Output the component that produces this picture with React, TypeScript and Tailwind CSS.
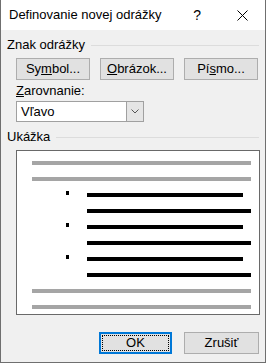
const font = { fontFamily: '"Liberation Sans", Arial, sans-serif' }

function Btn({ children, w = "w-[74px]" }: { children: React.ReactNode; w?: string }) {
  return (
    <div className={`${w} h-[22px] flex items-center justify-center bg-[#e1e1e1] border border-[#adadad] text-[13px] text-black`}>
      {children}
    </div>
  )
}

function Group({ title }: { title: string }) {
  return (
    <div className="flex items-center h-[16px] pl-[6px] pr-[6px]">
      <span className="text-[13px] leading-[16px] text-black">{title}</span>
      <div className="h-px flex-1 bg-[#dcdcdc] ml-[6px]" />
    </div>
  )
}

function Line({ kind }: { kind: "gray" | "short" | "long" }) {
  if (kind === "gray") return <div className="h-[4px] ml-[15px] w-[219px] bg-[#a5a5a5]" />
  return (
    <div className="flex items-start h-[4px]">
      <div className="w-[70px] shrink-0 pl-[49px]">
        {kind === "short" && <div className="w-[3px] h-[4px] bg-black -mt-[2px]" />}
      </div>
      <div className={`h-[4px] bg-black ${kind === "short" ? "w-[156px]" : "w-[164px]"}`} />
    </div>
  )
}

export default function App() {
  const rows: ("gray" | "short" | "long")[] = ["gray", "gray", "short", "long", "short", "long", "short", "long", "gray", "gray"]
  return (
    <div style={font} className="w-[266px] h-[363px] bg-[#f0f0f0] border-x border-b border-[#6f6f6f] flex flex-col text-black">
      <div className="h-[30px] bg-white flex items-center pl-[8px] shrink-0">
        <span className="text-[13px]">Definovanie novej odrážky</span>
        <span className="ml-auto mr-[36px] text-[14px]">?</span>
        <svg width="11" height="11" viewBox="0 0 11 11" className="mr-[17px]">
          <path d="M0.5 0.5 L10.5 10.5 M10.5 0.5 L0.5 10.5" stroke="#000" strokeWidth="1" />
        </svg>
      </div>

      <div className="mt-[7px]">
        <Group title="Znak odrážky" />
      </div>

      <div className="flex mt-[5px] pl-[15px] gap-[10px]">
        <Btn>Sy<u>m</u>bol...</Btn>
        <Btn><u>O</u>brázok...</Btn>
        <Btn>Pí<u>s</u>mo...</Btn>
      </div>

      <div className="pl-[15px] mt-[3px] text-[13px] leading-[16px]"><u>Z</u>arovnanie:</div>
      <div className="ml-[15px] mt-[2px] w-[128px] h-[21px] flex border border-[#a0a0a0] bg-white">
        <div className="flex-1 flex items-center pl-[4px] text-[13px]">Vľavo</div>
        <div className="w-[17px] flex items-center justify-center bg-[#e5e5e5] border-l border-[#a0a0a0]">
          <svg width="8" height="5" viewBox="0 0 8 5">
            <path d="M0.5 0.5 L4 4 L7.5 0.5" fill="none" stroke="#555" strokeWidth="1" />
          </svg>
        </div>
      </div>

      <div className="mt-[7px]">
        <Group title="Ukážka" />
      </div>

      <div className="ml-[15px] mt-[5px] w-[244px] h-[165px] border border-[#696969] bg-white flex flex-col gap-[12px] pt-[10px]">
        {rows.map((r, i) => (
          <Line key={i} kind={r} />
        ))}
      </div>

      <div className="flex justify-end gap-[12px] pr-[6px] mt-[17px]">
        <div className="w-[73px] h-[22px] border-2 border-[#0078d7] bg-[#e1e1e1] p-[1px]">
          <div className="w-full h-full border border-dotted border-black flex items-center justify-center text-[13px]">OK</div>
        </div>
        <Btn w="w-[75px]">Zrušiť</Btn>
      </div>
    </div>
  )
}
